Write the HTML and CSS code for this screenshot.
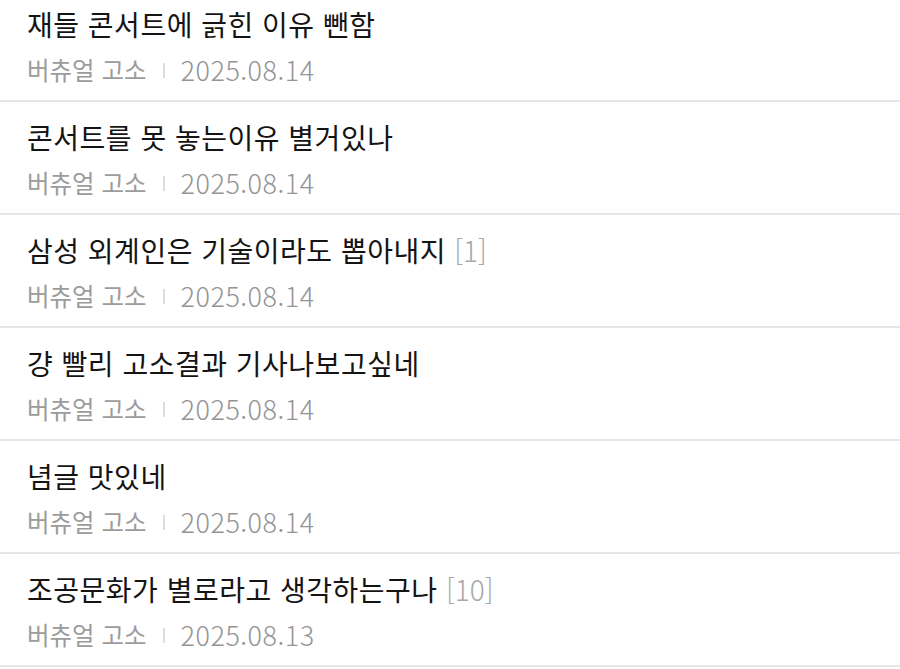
FILE: index.html
```html
<!DOCTYPE html>
<html lang="ko">
<head>
<meta charset="utf-8">
<link rel="stylesheet" href="styles.css">
</head>
<body>
<ul class="list">
  <li class="item">
    <div class="title">재들 콘서트에 긁힌 이유 뺀함</div>
    <div class="meta"><span class="board">버츄얼 고소</span><span class="sep"></span><span class="date">2025.08.14</span></div>
  </li>
  <li class="item">
    <div class="title">콘서트를 못 놓는이유 별거있나</div>
    <div class="meta"><span class="board">버츄얼 고소</span><span class="sep"></span><span class="date">2025.08.14</span></div>
  </li>
  <li class="item">
    <div class="title">삼성 외계인은 기술이라도 뽑아내지 <span class="count">[1]</span></div>
    <div class="meta"><span class="board">버츄얼 고소</span><span class="sep"></span><span class="date">2025.08.14</span></div>
  </li>
  <li class="item">
    <div class="title">걍 빨리 고소결과 기사나보고싶네</div>
    <div class="meta"><span class="board">버츄얼 고소</span><span class="sep"></span><span class="date">2025.08.14</span></div>
  </li>
  <li class="item">
    <div class="title">념글 맛있네</div>
    <div class="meta"><span class="board">버츄얼 고소</span><span class="sep"></span><span class="date">2025.08.14</span></div>
  </li>
  <li class="item">
    <div class="title">조공문화가 별로라고 생각하는구나 <span class="count">[10]</span></div>
    <div class="meta"><span class="board">버츄얼 고소</span><span class="sep"></span><span class="date">2025.08.13</span></div>
  </li>
</ul>
</body>
</html>
```

FILE: styles.css
```css
html, body {
  margin: 0;
  padding: 0;
  background: #ffffff;
  overflow: hidden;
}
body {
  font-family: "Noto Sans CJK KR", "Noto Sans", sans-serif;
}
.list {
  list-style: none;
  margin: -11px 0 0 0;
  padding: 0;
}
.item {
  height: 111px;
  border-bottom: 2px solid #e6e6e9;
  padding: 0 0 0 27px;
  box-sizing: content-box;
  display: flex;
  flex-direction: column;
}
.title {
  font-size: 28px;
  letter-spacing: 0.5px;
  line-height: 38px;
  color: #141414;
  margin-top: 16px;
  white-space: nowrap;
}
.count {
  color: #a8a8a8;
  font-weight: 300;
  letter-spacing: 0;
}
.meta {
  display: flex;
  align-items: center;
  font-size: 24.5px;
  line-height: 34px;
  color: #9c9c9c;
  margin-top: 10px;
}
.sep {
  display: inline-block;
  width: 2px;
  height: 15px;
  background: #dcdde2;
  margin: 0 16px 0 16px;
}
.date {
  font-size: 27px;
  font-weight: 300;
  letter-spacing: 0.5px;
  color: #949494;
}
```
